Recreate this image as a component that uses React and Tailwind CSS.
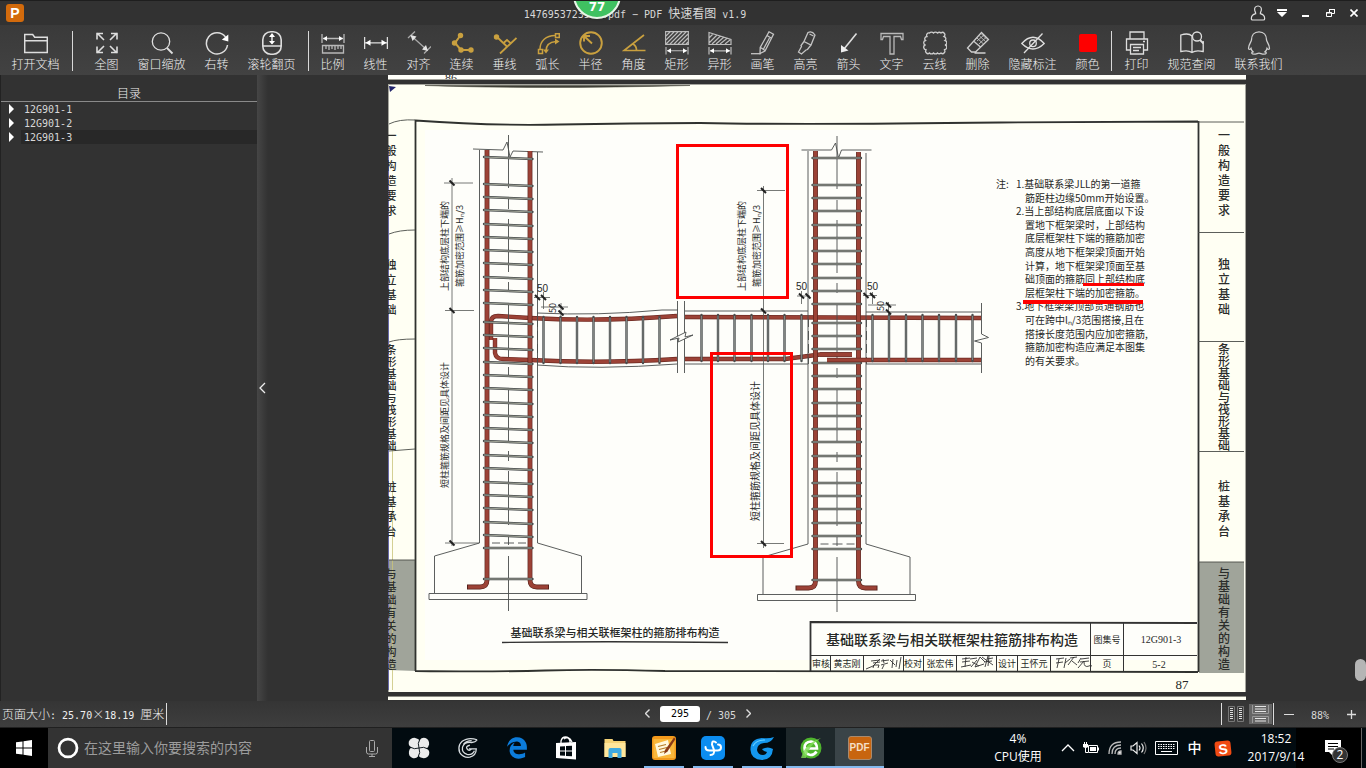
import { FaEdgeLegacy } from 'react-icons/fa'

const GOLD = '#c9a03f'
const STEEL = '#474b4c'
const REBAR = '#9c4236'

const Svg = ({ size = 24, children, ...rest }) => (
  <svg
    width={size}
    height={size}
    viewBox="0 0 24 24"
    fill="none"
    stroke="#dedede"
    strokeWidth="1.3"
    aria-hidden="true"
    {...rest}
  >
    {children}
  </svg>
)

const ICONS = {
  open: (
    <Svg>
      <path d="M.7 21.5V3.5h8l2 2.7h12.6v15.3zM.7 9.7h22.6" strokeWidth="1.5" />
    </Svg>
  ),
  fit: (
    <Svg>
      <path d="M9 9L2 2m6 .5H2v6M15 9l7-7m-6 .5h6v6M9 15l-7 7m6-.5H2v-6M15 15l7 7m-6-.5h6v-6" strokeWidth="1.6" />
    </Svg>
  ),
  zoom: (
    <Svg>
      <circle cx="11" cy="10.5" r="8.7" />
      <path d="M17 17l5.5 5.5" strokeWidth="1.8" />
    </Svg>
  ),
  rotate: (
    <Svg>
      <path d="M20.5 6A10.6 10.6 0 1 0 22.5 14" strokeWidth="1.5" />
      <path d="M23.3 3.5v7l-6.5-1.8z" fill="#fff" stroke="none" />
    </Svg>
  ),
  wheel: (
    <Svg strokeWidth="1.6">
      <rect x="2.8" y=".8" width="18.4" height="22.4" rx="8" />
      <path d="M3 15h18M12 3.5v9" />
      <path d="M12 2l3 4H9zM12 13.5l3-3.5H9z" fill="#fff" stroke="none" />
    </Svg>
  ),
  scale: (
    <Svg stroke="#b8b8b8">
      <path d="M1 3v9M23 3v9M2 7.5h20" />
      <path d="M2 7.5l4-2.5v5zM22 7.5l-4-2.5v5z" fill="#fff" stroke="none" />
      <path d="M1.5 14.5h21v7.5h-21zM5 15v3M8 15v4M11 15v3M14 15v4M17 15v3M20 15v3" />
    </Svg>
  ),
  linear: (
    <Svg>
      <path d="M.6 6v12M23.4 6v12M1 11.8h22" />
      <path d="M1.5 11.8l5-3v6zM22.5 11.8l-5-3v6z" fill="#fff" stroke="none" />
    </Svg>
  ),
  align: (
    <Svg stroke="#a9a9a9">
      <path d="M1 7L8 .5M17 22.5l7-7M4.5 5L20 19" />
      <path d="M3.5 4l6 1.5L5.5 10zM21 20l-6-1.5 4-4.5z" fill="#e6e6e6" stroke="none" />
    </Svg>
  ),
  chain: (
    <Svg stroke={GOLD} strokeWidth="2">
      <path d="M10 5L5 12l6 7h10" />
      <g fill={GOLD} stroke="none">
        <circle cx="10.5" cy="4.5" r="2.7" />
        <circle cx="4.5" cy="12" r="2.7" />
        <circle cx="11" cy="19" r="2.7" />
        <circle cx="21" cy="19" r="2.7" />
      </g>
    </Svg>
  ),
  perp: (
    <Svg stroke={GOLD} strokeWidth="1.8">
      <path d="M4 6l10.5 10M23.5 7L7 22.5" />
      <path d="M10.5 12l3.5-3 4 3.5" />
      <circle cx="3.5" cy="6" r="2.7" fill={GOLD} stroke="none" />
    </Svg>
  ),
  arc: (
    <Svg stroke={GOLD} strokeWidth="1.5">
      <path d="M4 18C4 10 10 4.5 19 4.5M10 20c0-6 4-9 10-9.500" />
      <path d="M2.5 18.5h4v4h-4zM19.5 2.8h3.8v3.8h-3.8z" />
      <path d="M19 7.5l4.5 3-4.5 3zM7 18.5h6l-3 4z" fill={GOLD} stroke="none" />
    </Svg>
  ),
  radius: (
    <Svg stroke={GOLD} strokeWidth="1.9">
      <circle cx="12" cy="12" r="10.8" />
      <path d="M13 12.5L5 5M5 10.5V5h6" />
    </Svg>
  ),
  angle: (
    <Svg stroke={GOLD} strokeWidth="1.7">
      <path d="M22 4L2 19.5h21.5M11 13c2.500 1.500 3.500 4 3.500 6" />
    </Svg>
  ),
  rect: (
    <Svg stroke="#bdbdbd" strokeWidth="1.1">
      <path d="M.6.6h22.8v12.8H.6zM1 5L5 1M1 9l8-8M1 13L13 1M5 13L17 1M9 13L21 1M13 13L23 3M17 13l6-6M21 13l2-2" />
      <path d="M1 16v7.5M23 16v7.5M2 19.8h20" />
      <path d="M2 19.8l4-2.5v5zM22 19.8l-4-2.5v5z" fill="#fff" stroke="none" />
    </Svg>
  ),
  poly: (
    <Svg stroke="#bdbdbd" strokeWidth="1.2">
      <path d="M1 1.5l22 7v5H1zM1 7l4-4M1 12l8-8M4 13l8.5-8M8 13l8-7M12 13l7.5-6M17 13l5-4" />
      <path d="M1 16v7.5M23 16v7.5M2 19.8h20" />
      <path d="M2 19.8l4-2.5v5zM22 19.8l-4-2.5v5z" fill="#fff" stroke="none" />
    </Svg>
  ),
  pen: (
    <Svg stroke="#c4c4c4">
      <path d="M18 .8l4.5 2.5L14 20l-5 2.5.2-6zM9.5 16.5l4.5 3M16 4.5l4.5 2.8M12.5 18l6-11" />
      <path d="M0 22.7h10" />
    </Svg>
  ),
  marker: (
    <Svg stroke="#c4c4c4">
      <path d="M14 1.5q4-2 7 2.5l-4 10-7-3.5zM10 10.5l-3 4 .5 1-3 5.5 3 2 4.5-4 1.500-.5 3.500-4.500M15.500 3l4 2" />
    </Svg>
  ),
  arrow: (
    <Svg strokeWidth="1.6">
      <path d="M19.5 2.5L7 18" />
      <path d="M4 21.5V14l7.5 5.5z" fill="#eee" stroke="none" />
    </Svg>
  ),
  text: (
    <Svg stroke="#b9b9b9">
      <path d="M1 2.5h22v6h-1.5l-1-3H14V23h-4V5.5H3.5l-1 3H1z" />
    </Svg>
  ),
  cloud: (
    <Svg stroke="#cdcdcd">
      <path d="M4 5.5A2.3 2.3 0 0 1 6.500 2 2.600 2.600 0 0 1 10.500 2a2.600 2.600 0 0 1 4 0A2.600 2.600 0 0 1 18 2a2.300 2.300 0 0 1 3 3.500 2.300 2.300 0 0 1 1 4 2.300 2.300 0 0 1 0 4.500 2.300 2.300 0 0 1-1 4.500 2.300 2.300 0 0 1-3 3.500 2.600 2.600 0 0 1-3.500 0 2.600 2.600 0 0 1-4 0 2.600 2.600 0 0 1-4 0A2.300 2.300 0 0 1 3.500 18.500a2.300 2.300 0 0 1-1-4.500 2.300 2.300 0 0 1 0-4.500 2.300 2.300 0 0 1 1.500-4z" />
    </Svg>
  ),
  erase: (
    <Svg stroke="#cfcfcf">
      <path d="M15.5 1.5l7 7-13 12.5H5.5L1.5 17zM7.5 10l7.5 6.5M8.5 22h11" />
      <path d="M15.5 3l5.5 5.5M13.5 5l6 5.5M11 7l6.5 6M18 4l-7 6M20 6.5L13 13" strokeWidth=".8" />
    </Svg>
  ),
  hide: (
    <Svg>
      <path d="M.8 12.5Q12 0 23.2 12.5 12 23.5.8 12.5zM21.5 2.5L3 22" />
      <circle cx="12" cy="12.3" r="3.3" />
    </Svg>
  ),
  color: (
    <Svg>
      <rect x="3" y="3" width="18" height="18" rx="2" fill="#fe0000" stroke="none" />
    </Svg>
  ),
  print: (
    <Svg>
      <path d="M5 7.5V1h14v6.5M5 19H1.5V8h21v11H19" />
      <path d="M5.5 13.5h13V23h-13zM8 16.5h8M8 19.5h6M18 10.5h2" />
    </Svg>
  ),
  book: (
    <Svg>
      <path d="M12 5v16.5M12 5C9.5 2.5 4 3 .8 4v16.5c4-1 8.5-1 11.2 1 2.7-2 7.2-2 11.2-1V10" />
      <circle cx="17" cy="5.5" r="4.5" />
      <path d="M20 9l3.5 3.5" strokeWidth="1.8" />
    </Svg>
  ),
  contact: (
    <Svg stroke="#cfcfcf">
      <path d="M12 .8c5 0 7.5 3.5 7.5 8 0 2 3 4.5 3 8.500 0 1.500-1.500 1.500-2.500 0-.5 2-1 2.500-2 3.500 2 .5 1.500 2.400-1 2.400s-3.500-1-5-1-2.500 1-5 1-3-1.900-1-2.400c-1-1-1.500-1.500-2-3.500-1 1.500-2.500 1.500-2.500 0 0-4 3-6.500 3-8.500 0-4.500 2.500-8 7.500-8z" />
    </Svg>
  ),
}

const TOOLS = [
  [['open', '打开文档']],
  [
    ['fit', '全图'],
    ['zoom', '窗口缩放'],
    ['rotate', '右转'],
    ['wheel', '滚轮翻页'],
  ],
  [
    ['scale', '比例'],
    ['linear', '线性'],
    ['align', '对齐'],
    ['chain', '连续'],
    ['perp', '垂线'],
    ['arc', '弧长'],
    ['radius', '半径'],
    ['angle', '角度'],
    ['rect', '矩形'],
    ['poly', '异形'],
    ['pen', '画笔'],
    ['marker', '高亮'],
    ['arrow', '箭头'],
    ['text', '文字'],
    ['cloud', '云线'],
    ['erase', '删除'],
    ['hide', '隐藏标注'],
    ['color', '颜色'],
  ],
  [
    ['print', '打印'],
    ['book', '规范查阅'],
    ['contact', '联系我们'],
  ],
]

const GROUP_PADDING = ['pl-[2px] pr-[3px]', 'pl-3 pr-[3px]', 'pl-[2px] pr-[2px]', 'pl-[3px]']

const Mono = ({ children }) => (
  <span className="font-['DejaVu_Sans_Mono',monospace] text-[10px]">{children}</span>
)

function TitleBar() {
  return (
    <header className="flex h-6 shrink-0 items-center bg-[#323232]">
      <span className="ml-[6px] flex size-[18px] items-center justify-center rounded-[3px] bg-[#d26a0c] font-['Liberation_Sans',sans-serif] text-sm font-bold text-white">
        P
      </span>
      <h1 className="flex-1 text-center whitespace-pre">
        <Mono>{'1476953723589.pdf − PDF '}</Mono>快速看图<Mono> v1.9</Mono>
      </h1>
      <div className="flex">
        <button type="button" aria-label="用户" className="flex h-6 w-6 items-center justify-center">
          <Svg size={16}>
            <path d="M12 1.5c4 0 5.500 3 5 6-.4 2.500-1.500 3.500-1.500 5.500 4 1 6.500 3.500 6.500 7.500 0 1.500-1 2-2 2H4c-1 0-2-.5-2-2 0-4 2.500-6.500 6.500-7.500 0-2-1.100-3-1.500-5.500-.5-3 1-6 5-6z" strokeWidth="1.8" />
          </Svg>
        </button>
        <button type="button" aria-label="菜单" className="flex h-6 w-6 items-center justify-center">
          <svg width="10" height="10" fill="#fff" aria-hidden="true">
            <path d="M0 1h10v2H0zM0 4h10L5 9z" />
          </svg>
        </button>
        <button type="button" aria-label="最小化" className="flex h-6 w-6 items-center justify-center">
          <svg width="8" height="10" fill="#fff" aria-hidden="true">
            <path d="M0 7h7v2H0z" />
          </svg>
        </button>
        <button type="button" aria-label="还原" className="flex h-6 w-6 items-center justify-center">
          <svg width="9" height="10" fill="none" stroke="#fff" aria-hidden="true">
            <path d="M3.5 4V1.5h5v4H6M3 1.5h6M.5 4.5h5v4h-5zM0 5h6" />
          </svg>
        </button>
        <button type="button" aria-label="关闭" className="flex h-6 w-6 items-center justify-center">
          <svg width="8" height="8" stroke="#fff" strokeWidth="1.6" aria-hidden="true">
            <path d="M.5.5l7 7M7.5.5l-7 7" />
          </svg>
        </button>
      </div>
    </header>
  )
}

function Toolbar() {
  return (
    <nav className="flex h-[50px] shrink-0 items-center bg-linear-to-b from-[#3a3a3a] to-[#424242] pt-[2px]">
      {TOOLS.map((group, i) => (
        <div key={i} className="flex items-center">
          {i > 0 && <span className="h-10 w-px bg-[#d8d8d8]" />}
          <div className={`flex ${GROUP_PADDING[i]}`}>
            {group.map(([icon, label]) => (
              <button
                key={icon}
                type="button"
                className={`flex flex-col items-center gap-px ${label.length > 2 ? 'w-[67px]' : 'w-[43px]'}`}
              >
                {ICONS[icon]}
                <span className="leading-4 font-light whitespace-nowrap text-[#f0f0f0]">{label}</span>
              </button>
            ))}
          </div>
        </div>
      ))}
    </nav>
  )
}

function Sidebar() {
  return (
    <aside className="w-64 shrink-0">
      <h2 className="flex h-[27px] items-end justify-center border-b border-[#8a8a8a] leading-4 font-light text-[#f0f0f0]">
        <span>目录</span>
      </h2>
      <ul>
        {['12G901-1', '12G901-2', '12G901-3'].map((name) => (
          <li key={name}>
            <button type="button" className="flex h-[14px] w-full items-center text-left">
              <svg width="20" height="10" fill="#fff" aria-hidden="true">
                <path d="M8 0l5 5-5 5z" />
              </svg>
              <span
                className={`flex h-full flex-1 items-center pt-px pl-[3px] ${name === '12G901-3' ? 'bg-[#282828]' : ''}`}
              >
                <Mono>{name}</Mono>
              </span>
            </button>
          </li>
        ))}
      </ul>
    </aside>
  )
}

// stirrup heights in a column
const COLUMN_TIES = [
  157, 184, 197, 210, 224, 237, 250, 263, 277, 290, 303, 322, 335, 348, 362, 375, 388, 402, 415,
  428, 441, 455, 468, 482, 495, 508, 522, 535, 548, 579,
]

const CENTER_LINE =
  'M508.5 135v53M508.5 199v10M508.5 219v53M508.5 282v10M508.5 303v54M508.5 367v10M508.5 388v53M508.5 451v10M508.5 471v54M508.5 535v10M508.5 556v55'

const Tick = ({ x, y }) => (
  <path d={`M${x - 2.5} ${y - 2.5}l5 5`} stroke="#222" strokeWidth="2" />
)

function Column({ dx, dy, slope }) {
  return (
    <g transform={`translate(${dx} ${dy})`}>
      <g stroke="#4a4d4c" strokeWidth=".9">
        <path d={CENTER_LINE} />
        <path d="M479.5 150v393l-45 13v37M537.5 152v391l44 13v37M429 593.5h158v6H429zM492 543h8m4 0h10m4 0h8" />
        <path d={`M473 149L503 ${149 + slope / 2}L507 142L510 157L513 ${149 + slope}L543 ${149 + slope * 1.5}`} />
      </g>
      <g stroke="#54201a" strokeWidth="4.8">
        <path d="M487 150v430q0 7-7 7h-13M530 151v429q0 7 7 7h12" />
      </g>
      <g stroke={REBAR} strokeWidth="3.6">
        <path d="M487 150v430q0 7-7 7h-12M530 151v429q0 7 7 7h11" />
      </g>
      {COLUMN_TIES.map((y) => {
        const drop = y < 540 ? slope : 0
        return (
          <g key={y}>
            <path d={`M484 ${y}L532.5 ${y + drop}`} stroke={STEEL} strokeWidth="2.4" strokeLinecap="round" />
            <path d={`M484 ${y}L532 ${y + drop}`} stroke="#c9ccb9" strokeWidth=".7" />
          </g>
        )
      })}
    </g>
  )
}

const Bar = ({ d }) => (
  <>
    <path d={d} stroke="#6d2a22" strokeWidth="4.4" />
    <path d={d} stroke={REBAR} strokeWidth="3.2" />
  </>
)

const BeamTies = ({ xs, top }) =>
  xs.map((x) => (
    <g key={x}>
      <path d={`M${x} ${top}v46`} stroke="#4b4f50" strokeWidth="2.4" strokeLinecap="round" />
      <path d={`M${x} ${top + 1}v44`} stroke="#a6aaa2" strokeWidth=".6" />
    </g>
  ))

const Upright = ({ x, y, size = 9, children }) => (
  <text transform={`translate(${x} ${y}) rotate(-90)`} fontSize={size}>
    {children}
  </text>
)

const TABS = [
  ['一般构造要求', 140, 15],
  ['独立基础', 269, 15],
  ['条形基础与筏形基础', 354, 12],
  ['桩基承台', 491, 15],
  ['与基础有关的构造', 578, 13],
]

const Tabs = ({ x, size }) =>
  TABS.map(([label, top, step]) => (
    <g key={label} fontSize={size} fontWeight="500" textAnchor="middle">
      {[...label].map((char, i) => (
        <text key={i} x={x} y={top + i * step}>
          {char}
        </text>
      ))}
    </g>
  ))

const NOTES = [
  [1016, '1.基础联系梁JLL的第一道箍'],
  [1025, '筋距柱边缘50mm开始设置。'],
  [1016, '2.当上部结构底层底面以下设'],
  [1025, '置地下框架梁时，上部结构'],
  [1025, '底层框架柱下端的箍筋加密'],
  [1025, '高度从地下框架梁顶面开始'],
  [1025, '计算，地下框架梁顶面至基'],
  [1025, '础顶面的箍筋同上部结构底'],
  [1025, '层框架柱下端的加密箍筋。'],
  [1016, '3.地下框架梁顶部贯通钢筋也'],
  [1025, '可在跨中lₙ/3范围搭接,且在'],
  [1025, '搭接长度范围内应加密箍筋,'],
  [1025, '箍筋加密构造应满足本图集'],
  [1025, '的有关要求。'],
]

function TitleBlock() {
  return (
    <g>
      <g stroke="#333" strokeWidth="1" fill="none">
        <path d="M810.5 671V622L1197 623" strokeWidth="1.8" />
        <path d="M811 655.5h386M1090.5 623v48M1123.5 623v48M830.5 656v15M863.5 656v15M903.5 656v15M923.5 656v15M956.5 656v15M996.5 656v15M1017.5 656v15M1050.5 656v15" />
      </g>
      <text x="952" y="645" fontSize="14" fontWeight="500" textAnchor="middle">
        基础联系梁与相关联框架柱箍筋排布构造
      </text>
      <g fontSize="9" textAnchor="middle">
        <text x="1107" y="643">图集号</text>
        <text x="821" y="667">审核</text>
        <text x="847" y="667">黄志刚</text>
        <text x="913" y="667">校对</text>
        <text x="940" y="667">张宏伟</text>
        <text x="1007" y="667">设计</text>
        <text x="1034" y="667">王怀元</text>
        <text x="1107" y="667">页</text>
      </g>
      <g fontSize="10" textAnchor="middle" fontFamily="'Liberation Serif', serif">
        <text x="1161" y="643">12G901-3</text>
        <text x="1159" y="668">5-2</text>
      </g>
      <g stroke="#333" strokeWidth=".9" fill="none">
        <path d="M866 669l7-3 7-7m-9 2l9-1m-7 3l7-1m-6 3h5l-1 3m-4-3l-1 3m10-9l1 4m-3-2l8-1m-8 5l7-2m-4 2l-2 4m11-10l-1 9m-2-8l5 5m2-5l-1 7m5-10l-2 12" />
        <path d="M962 659l8-1m-8 4l8-1m-4-4l-1 10m-4 0l10-2m-1-6l7-1m-6 9l6-7m-5 2l7 4m1-9l-5 10 9-3m-4-7l5 5m3-6l-3 11m2-8l6-1m-4-2l-1 10m-4-4l8-1m-10-4l11 8" />
        <path d="M1056 659l8-1m-8 5l7-1m-4-3l-2 9m9-10l-2 10m6-9l-5 4m5-5l7-1m-3 0l-6 8m4-4l5 4m4-7l-3 5m3-4l8-1m-9 4l9-1m-5 0l-6 7m6-6q0 6 5 4 1-1 3 0" />
      </g>
    </g>
  )
}

function Drawing() {
  return (
    <svg
      viewBox="388 84 858 608"
      className="block h-auto w-full"
      fill="none"
      fontFamily="'Noto Sans CJK SC', sans-serif"
      role="img"
      aria-label="基础联系梁与相关联框架柱的箍筋排布构造"
    >
      <rect x="388" y="84" width="858" height="608" fill="#fffff3" />
      <rect x="425" y="130" width="765" height="530" fill="#fefefa" />
      <path d="M425 85.5q110 4 265 0z" fill="#3e3e35" stroke="#3e3e35" strokeWidth=".5" />
      <path d="M388.5 84v608M1245.5 84v608M388 84.5h858" stroke="#a5a59d" />
      <path d="M389 86l7 1-6 5z" fill="#22256b" />

      {/* sheet frame and chapter tabs */}
      <path d="M388 560h28v111l-28-1zM1199 562h45v111h-45z" fill="#a0a49a" />
      <path d="M388.5 150v540" stroke="#6668a8" />
      <path d="M392.5 440v250" stroke="#c9c47a" strokeWidth=".8" />
      <path
        d="M415.5 671V120.5Q490 126 560 124.5T700 123q100 2 300-.5l198-1M1198.5 121v551M415 671q80 1 130-.5t120 .5l533 1"
        stroke="#30322e"
        strokeWidth="1.8"
      />
      <path
        d="M389 124q10-5 26-4M389 234q10-4 26-4M389 342q8-3 26-3M389 451l26-2M389 560h26M1198 122h46M1198 232.5h46M1198 341.5h46M1198 451.5h46M1198 562h46"
        stroke="#4a4d48"
        strokeWidth=".9"
      />
      <g fill="#2b2d2b">
        <Tabs x={1224} size={12} />
        <Tabs x={391} size={11} />
      </g>

      {/* beams */}
      <g stroke="#4a4d4c" strokeWidth=".9">
        <path d="M537 313q60 3 125-3h16M537 365q60 5 140-1M685 311h123M685 364h123M866 312h115M866 364h115" />
        <path d="M677.5 301v72M684.5 301v72M981.5 303v31l7 3.5-14 3.5 7 2v30" />
        <path d="M537.5 318v46M808.5 318v46M866.5 318v46" strokeDasharray="9 4" />
      </g>
      <Bar d="M491 340v-18q0-6 7-6l32 2q70 4 147-2" />
      <Bar d="M495 338v15q1 6 8 6l27 1q70 4 147-1" />
      <Bar d="M685 317l296 1" />
      <Bar d="M685 359h100l35-4.5h32" />
      <path d="M670 340l16-8-1 5 8-2-15 7 1-4z" fill="#fefefa" stroke="#4a4d4c" strokeWidth=".9" />
      <Column dx={0} dy={0} slope={2} />
      <Column dx={328.5} dy={1} slope={0} />
      <Bar d="M827 360h154" />
      <Bar d="M820 354.5h32" />
      <BeamTies xs={[543.5, 560.5, 577, 593.5, 610, 626.5, 643, 659.5]} top={317} />
      <BeamTies xs={[701.5, 718, 734.5, 751.5, 768, 784.5, 801.5]} top={315} />
      <BeamTies xs={[872.5, 889, 906, 922.5, 939, 956, 972.5]} top={315} />

      {/* dimensions */}
      <g stroke="#555855" strokeWidth=".8">
        <path d="M452 178v368M444 183h29M445 310.5h29M445 543h34" />
        <path d="M763.5 186v362M757 190.5h28M757 543.5h27" />
        <path d="M534 297.5h16M543.5 292v17M541 307h27M561 303v14M797 296h13M801.5 291v13M863 295.5h14M872.5 292v12M868 305h28M888.5 302v13" />
      </g>
      {[
        [452, 183],
        [452, 310.5],
        [452, 543],
        [763.5, 190.5],
        [763.5, 311],
        [763.5, 543.5],
        [537.5, 297.5],
        [543.5, 297.5],
        [561, 307],
        [561, 313],
        [801.5, 296],
        [808, 296],
        [866, 295.5],
        [872.5, 295.5],
        [888.5, 305],
        [888.5, 312],
      ].map(([x, y]) => (
        <Tick key={`${x}-${y}`} x={x} y={y} />
      ))}

      <g fill="#262826">
        <g fontSize="10" fontFamily="'Liberation Sans', sans-serif">
          <text x="537" y="292">50</text>
          <text x="796" y="290">50</text>
          <text x="867" y="290">50</text>
        </g>
        <Upright x={556} y={313}>50</Upright>
        <Upright x={884} y={311}>50</Upright>
        <Upright x={448} y={291}>上部结构底层柱下端的</Upright>
        <Upright x={463} y={287}>箍筋加密范围≥Hₙ/3</Upright>
        <Upright x={448} y={488}>短柱箍筋规格及间距见具体设计</Upright>
        <Upright x={745} y={291}>上部结构底层柱下端的</Upright>
        <Upright x={760} y={287}>箍筋加密范围≥Hₙ/3</Upright>
        <Upright x={759} y={521} size={10}>短柱箍筋规格及间距见具体设计</Upright>

        <text x="615" y="637" fontSize="11" fontWeight="500" textAnchor="middle">
          基础联系梁与相关联框架柱的箍筋排布构造
        </text>
        <text x="996" y="188" fontSize="10">注:</text>
        {NOTES.map(([x, line], i) => (
          <text key={line} x={x} y={188 + Math.round(i * 13.6)} fontSize="10">
            {line}
          </text>
        ))}
        <TitleBlock />
        <text x="1182" y="689" fontSize="13" textAnchor="middle" fontFamily="'Liberation Serif', serif">
          87
        </text>
      </g>
      <path d="M502 642.5q100-1.5 226 0" stroke="#333" strokeWidth="1.4" />

      {/* review marks */}
      <g stroke="#fe0000" strokeWidth="3">
        <rect x="677.5" y="145.5" width="110" height="152" />
        <rect x="711.5" y="353.5" width="80" height="203" />
        <path d="M1083 284.5h61" />
        <path d="M1023 302h120" strokeWidth="4" />
      </g>
    </svg>
  )
}

function Viewer() {
  return (
    <main className="relative flex min-w-0 flex-1 flex-col items-center gap-1 overflow-hidden">
      <div className="h-[5px] w-full max-w-[858px] shrink-0 overflow-hidden border-b border-[#a5a59d] bg-[#fffffa] pl-[57px] font-['Liberation_Serif',serif] text-xs leading-[7px] text-[#333]">
        86
      </div>
      <div className="w-full max-w-[858px] shrink-0">
        <Drawing />
      </div>
      <div className="h-1 w-full max-w-[858px] shrink-0 border-t border-[#8d8d85] bg-[#fffff3]" />
      <span className="absolute right-0 bottom-5 h-[22px] w-[11px] rounded-full bg-[#b5b5b5]" />
    </main>
  )
}

function StatusBar() {
  return (
    <footer className="flex h-[27px] shrink-0 items-center border-b border-[#202020] bg-linear-to-b from-[#353535] to-[#3e3e3e]">
      <div className="flex flex-1 items-center">
        <p className="pl-[2px] font-light whitespace-pre text-[#f0f0f0]">
          页面大小<Mono>: 25.70</Mono>
          <span className="inline-block w-3 text-center">×</span>
          <Mono>18.19 </Mono>厘米
        </p>
        <span className="ml-[2px] h-[22px] w-px bg-[#ddd]" />
      </div>
      <form className="flex items-center pl-[30px]" onSubmit={(event) => event.preventDefault()}>
        <button type="button" aria-label="上一页" className="flex w-6 justify-center">
          <svg width="5" height="9" fill="none" stroke="#ddd" strokeWidth="1.4" aria-hidden="true">
            <path d="M4.5.5l-4 4 4 4" />
          </svg>
        </button>
        <input
          aria-label="页码"
          defaultValue="295"
          className="h-4 w-10 rounded-[3px] bg-white text-center font-['DejaVu_Sans_Mono',monospace] text-[10px] text-black"
        />
        <span className="pl-[6px] whitespace-pre">
          <Mono>/ 305</Mono>
        </span>
        <button type="button" aria-label="下一页" className="flex w-6 justify-center">
          <svg width="5" height="9" fill="none" stroke="#ddd" strokeWidth="1.4" aria-hidden="true">
            <path d="M.5.5l4 4-4 4" />
          </svg>
        </button>
      </form>
      <div className="flex flex-1 items-center justify-end">
        <span className="h-[22px] w-px bg-[#ddd]" />
        <button type="button" aria-label="双页" className="flex w-[27px] justify-center">
          <svg width="16" height="16" fill="none" stroke="#777" aria-hidden="true">
            <path d="M.5.5h6v15h-6zM9.5.5h6v15h-6z" />
            <path d="M3.5 2v12M12.5 2v12" stroke="#ddd" strokeWidth="3" strokeDasharray="1 1" />
          </svg>
        </button>
        <button type="button" aria-label="单页" className="flex h-5 w-[23px] items-center justify-center bg-[#666]">
          <svg width="17" height="18" fill="none" stroke="#999" aria-hidden="true">
            <path d="M.5 0v8.5h16V0M.5 18v-6.5h16V18" />
            <path d="M3 1.5h11M3 4h11M3 6.5h11M3 13.5h11M3 16h11" stroke="#e5e5e5" />
          </svg>
        </button>
        <span className="ml-px h-[22px] w-px bg-[#ddd]" />
        <button type="button" aria-label="缩小" className="flex w-[30px] justify-center">
          <svg width="10" height="9" stroke="#ddd" aria-hidden="true">
            <path d="M0 4.5h10" />
          </svg>
        </button>
        <span className="w-8 text-center">
          <Mono>88%</Mono>
        </span>
        <button type="button" aria-label="放大" className="flex w-[30px] justify-center">
          <svg width="9" height="9" stroke="#ddd" strokeWidth="1.3" aria-hidden="true">
            <path d="M0 4.5h9M4.5 0v9" />
          </svg>
        </button>
      </div>
    </footer>
  )
}

const APPS = [
  {
    name: '搜狗',
    icon: (
      <Svg size={22} fill="#ececec" stroke="none">
        <path d="M1 5Q3 .5 8 1q5 1 5 5v6Q7 13 3 11 0 9 1 5z" />
        <path d="M19 1Q23.5 3 23 8q-1 5-5 5h-6Q11 7 13 3q2-3 6-2z" />
        <path d="M23 19q-2 4.5-7 4-5-1-5-5v-6q6-1 10 1 3 2 2 6z" />
        <path d="M5 23Q.5 21 1 16q1-5 5-5h6q1 6-1 10-2 3-6 2z" />
        <path d="M13 2q-3 5-1 10M22 13q-5-3-10-1M11 22q3-5 1-10M2 11q5 3 10 1" stroke="#020b10" strokeWidth="1" fill="none" />
      </Svg>
    ),
  },
  {
    name: '管家',
    icon: (
      <Svg size={22} stroke="#d8dde0" strokeWidth="1.4">
        <path d="M22 3q-7-2-12-.5C3 4.5.5 11 3 17q4 6 11 5 7-2 7-9H13M22 3q-2 3-6 3-8-1-10 5-1 6 5 8 6 1 8-4M14 9q-5 1-3 4t5 0M7 8q3-4 9-4" />
      </Svg>
    ),
  },
  { name: 'Edge', icon: <FaEdgeLegacy size={22} color="#0c7cdb" aria-hidden="true" /> },
  {
    name: '应用商店',
    icon: (
      <Svg fill="#fff" stroke="none">
        <path d="M2 7l20-1v17.5L2 22z" />
        <path d="M7 9V5q1-4 4.5-4T16 5v3M10 3q5-4 8 3" fill="none" stroke="#fff" />
        <path d="M6 10.5l5-.3v4.300H6zM12 10.100l6-.4v4.800h-6zM6 15.500h5v4.300l-5-.3zM12 15.500h6v4.800l-6-.4z" fill="#020b10" />
      </Svg>
    ),
  },
  {
    name: '文件资源管理器',
    icon: (
      <Svg stroke="none">
        <path d="M1.5 3h8l1 2h12v16h-21z" fill="#f5d377" />
        <path d="M1.5 7h21v14h-21z" fill="#ffe69b" />
        <path d="M5.5 22v-8q0-2 2-2h9q2 0 2 2v8h-4v-5h-5v5z" fill="#3fa9e0" />
      </Svg>
    ),
  },
  {
    name: '便签',
    open: true,
    icon: (
      <Svg stroke="none">
        <rect width="24" height="24" rx="3" fill="#f39a1c" />
        <path d="M1.5 3h21v19h-21z" fill="#f9b73a" />
        <path d="M3 8l13-4 3 14-13 3z" fill="#fff8dc" />
        <path d="M6 10.5l8-2M7 13.5l8-2M8 16.5l6-1.5" stroke="#b67b28" strokeWidth="1.2" />
        <path d="M22 1.5L13 14l-1 4 3.5-2.5L23.5 3z" fill="#8a3a16" />
      </Svg>
    ),
  },
  {
    name: '云同步',
    open: true,
    icon: (
      <Svg stroke="none">
        <rect width="24" height="24" rx="5" fill="#0c8df0" />
        <path
          d="M15 6.5Q11 3.5 11 8.5L13 14q.8 5-3.500 5M4.500 11q0 3.500 4 3.500h8q3.500 0 3.500-3t-3-3"
          fill="none"
          stroke="#fff"
          strokeWidth="2"
          strokeLinecap="round"
        />
      </Svg>
    ),
  },
  {
    name: '广联达',
    open: true,
    icon: (
      <Svg fill="#1497ee" stroke="none">
        <path d="M24 1q-3 6-10 6-7 1-7 7 1 5 6 5 3 0 4-3-3 0-5-3 6-3 11 0-1 11-11 11Q1 23.5.5 14 0 3 12 2q7 1 12-1z" />
        <path d="M3 10q3-6 12-6" stroke="#68d0ff" strokeWidth="1.2" fill="none" />
      </Svg>
    ),
  },
  {
    name: '浏览器',
    open: true,
    tone: 'bg-[#1e282b]',
    icon: (
      <Svg stroke="none">
        <circle cx="12" cy="12" r="10.5" fill="#4fb52d" />
        <path d="M17.5 15.5q-2 3.5-6 3.500-6-1-6-7t6.500-6.500q6 .5 6 7H6" fill="none" stroke="#fff" strokeWidth="2.6" />
        <path d="M2 22Q6 7 22 2q-13 8-15 20z" fill="#7fdd55" opacity=".8" />
      </Svg>
    ),
  },
  {
    name: 'PDF 快速看图',
    open: true,
    tone: 'bg-[#3a4448]',
    icon: (
      <span className="flex size-6 items-center justify-center rounded-[3px] border border-[#a98a6d] bg-[#c8650f] font-['Liberation_Sans',sans-serif] text-[10px] font-bold text-[#f5dfc5]">
        PDF
      </span>
    ),
  },
]

function Taskbar() {
  return (
    <div className="flex h-10 shrink-0 bg-[#020b10] font-['Open_Sans','Noto_Sans_CJK_SC',sans-serif] text-white">
      <button type="button" aria-label="开始" className="flex w-12 items-center justify-center bg-black">
        <svg width="16" height="16" fill="#fff" aria-hidden="true">
          <path d="M0 2.3L6.5 1.4v6.1H0zM7.5 1.2L16 0v7.5H7.5zM0 8.5h6.5v6.1L0 13.7zM7.5 8.5H16V16l-8.5-1.2z" />
        </svg>
      </button>
      <label className="flex w-[344px] items-center bg-[#333] pr-[14px] pl-[9px]">
        <Svg size={22} stroke="#fff" strokeWidth="3">
          <circle cx="12" cy="12" r="9.8" />
        </Svg>
        <input
          aria-label="搜索"
          placeholder="在这里输入你要搜索的内容"
          className="ml-[5px] min-w-0 flex-1 bg-transparent text-sm placeholder:text-[#9c9c9c]"
        />
        <svg width="12" height="17" fill="none" stroke="#aaa" aria-hidden="true">
          <path d="M3.5 1.5q0-1 1-1h3q1 0 1 1v9q0 1-1 1h-3q-1 0-1-1zM.5 7v5q0 2 2 2h7q2 0 2-2V7M6 14v2.5M3 16.5h6" />
        </svg>
      </label>
      <div className="flex pl-[2px]">
        {APPS.map((app) => (
          <button
            key={app.name}
            type="button"
            aria-label={app.name}
            className={`flex w-[49px] flex-col items-center justify-between ${app.tone ?? ''}`}
          >
            <span className="flex flex-1 items-center justify-center pt-[2px]">{app.icon}</span>
            <span className={`h-[2px] ${app.open ? 'bg-[#84b9ee]' : ''} ${app.tone ? 'w-full' : 'w-10'}`} />
          </button>
        ))}
      </div>
      <div className="ml-auto flex items-center text-xs leading-[18px]">
        <p className="w-[76px] text-center">
          4%
          <br />
          CPU使用
        </p>
        <div className="flex items-center gap-2">
          <svg width="14" height="8" fill="none" stroke="#fff" strokeWidth="1.3" aria-hidden="true" className="ml-[5px]">
            <path d="M1 7l6-6 6 6" />
          </svg>
          <svg width="17" height="12" fill="none" stroke="#fff" aria-hidden="true">
            <path d="M5.5 3.5h9v7h-9zM15.5 5.5v3" />
            <path d="M7 5h6v4H7zM0 2h5v3q-2 2-5 0z" fill="#fff" stroke="none" />
            <path d="M1.5 0v2M3.5 0v2M2.5 6v4.5H5" />
          </svg>
          <svg width="14" height="14" fill="none" stroke="#bbb" strokeWidth="1.3" aria-hidden="true">
            <path d="M1 13Q1 1 13 1M4 13q0-9 9-9M7 13q0-6 6-6" />
            <path d="M10 13q0-3 3-3v3z" fill="#fff" />
          </svg>
          <svg width="17" height="14" fill="none" stroke="#eee" strokeWidth="1.2" aria-hidden="true">
            <path d="M1 5v4h2l4 3.5v-11L3 5zM9 4.5q2 2.5 0 5M11.5 2.5q3.5 4.5 0 9" />
            <path d="M14 1q4 6 0 12" stroke="#777" />
          </svg>
          <svg width="23" height="14" fill="none" stroke="#fff" aria-hidden="true">
            <path d="M.5.5h22v13H.5z" />
            <path d="M3 3.5h17M3 5.5h17M3 7.5h17" strokeDasharray="1.5 1" />
            <path d="M6 10.5h11" />
          </svg>
          <span className="w-[17px] text-center text-sm font-medium">中</span>
          <span className="ml-1 flex h-[15px] w-4 -rotate-6 items-center justify-center rounded-[3px] bg-[#f04a12] font-['Liberation_Sans',sans-serif] text-sm font-bold">
            S
          </span>
        </div>
        <time
          className="flex h-full w-[76px] flex-col justify-center bg-linear-to-r from-[#020b10] from-85% to-black to-85% pl-[14px] text-center"
          dateTime="2017-09-14T18:52"
        >
          <span>18:52</span>
          <span>2017/9/14</span>
        </time>
        <button type="button" aria-label="通知" className="relative flex h-full w-[54px] items-center bg-black pl-[18px]">
          <svg width="17" height="16" fill="#fff" aria-hidden="true">
            <path d="M0 0h16v12H8v4l-4-4H0z" />
            <path d="M3 3.5h10M3 6.5h10M3 9h6" stroke="#000" />
          </svg>
          <span className="absolute right-[13px] bottom-[5px] flex size-4 items-center justify-center rounded-full border border-[#777] bg-[#333] text-xs">
            2
          </span>
        </button>
        <span className="h-full w-[5px] border-l border-[#666] bg-[#020b10]" />
      </div>
    </div>
  )
}

export default function App() {
  return (
    <div className="relative flex h-screen flex-col overflow-hidden border-t border-[#1e1e1e] bg-[#323232] font-['Noto_Sans_CJK_SC',sans-serif] text-xs text-[#d8d8d8]">
      <TitleBar />
      <Toolbar />
      <div className="flex min-h-0 flex-1">
        <div className="w-px shrink-0 bg-[#222]" />
        <Sidebar />
        <button
          type="button"
          aria-label="收起目录"
          className="flex w-[11px] shrink-0 items-center justify-center bg-linear-to-r from-[#464646] to-[#323232]"
        >
          <svg width="7" height="12" fill="none" stroke="#eee" strokeWidth="1.3" aria-hidden="true">
            <path d="M6 1L1 6l5 5" />
          </svg>
        </button>
        <Viewer />
      </div>
      <StatusBar />
      <Taskbar />
      <div className="absolute -top-[30px] left-[573px] flex size-12 items-end justify-center rounded-full border-2 border-[#e8f5e8] bg-[#3fc161] pb-[2px] font-['DejaVu_Sans',sans-serif] text-xs font-bold text-white shadow">
        77
      </div>
    </div>
  )
}
